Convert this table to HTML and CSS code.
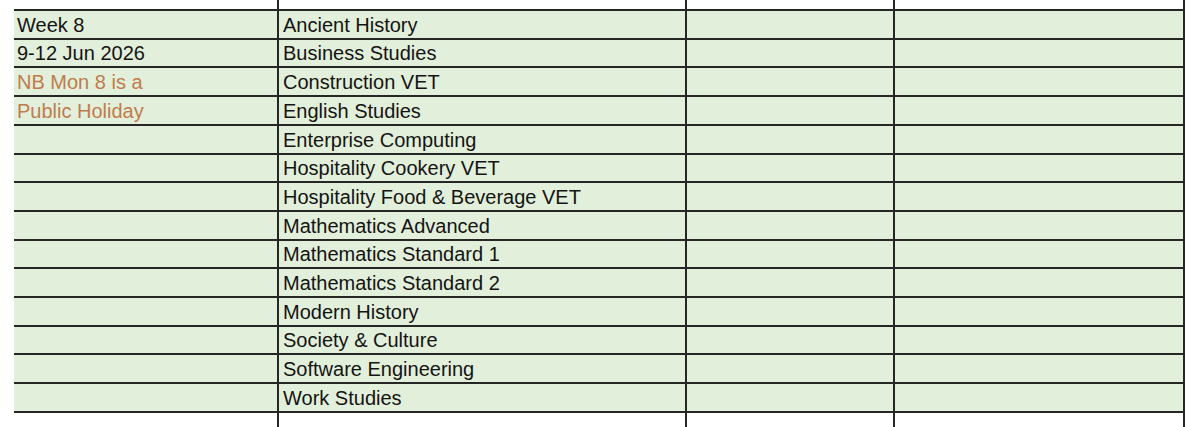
FILE: index.html
```html
<!DOCTYPE html>
<html>
<head>
<meta charset="utf-8">
<link rel="stylesheet" href="styles.css">
</head>
<body>
<div class="sheet">
  <div class="cell top"></div><div class="cell top"></div><div class="cell top"></div><div class="cell top"></div>

  <div class="cell g">Week 8</div><div class="cell g">Ancient History</div><div class="cell g"></div><div class="cell g"></div>
  <div class="cell g">9-12 Jun 2026</div><div class="cell g">Business Studies</div><div class="cell g"></div><div class="cell g"></div>
  <div class="cell g note">NB Mon 8 is a</div><div class="cell g">Construction VET</div><div class="cell g"></div><div class="cell g"></div>
  <div class="cell g note">Public Holiday</div><div class="cell g">English Studies</div><div class="cell g"></div><div class="cell g"></div>
  <div class="cell g"></div><div class="cell g">Enterprise Computing</div><div class="cell g"></div><div class="cell g"></div>
  <div class="cell g"></div><div class="cell g">Hospitality Cookery VET</div><div class="cell g"></div><div class="cell g"></div>
  <div class="cell g"></div><div class="cell g">Hospitality Food &amp; Beverage VET</div><div class="cell g"></div><div class="cell g"></div>
  <div class="cell g"></div><div class="cell g">Mathematics Advanced</div><div class="cell g"></div><div class="cell g"></div>
  <div class="cell g"></div><div class="cell g">Mathematics Standard 1</div><div class="cell g"></div><div class="cell g"></div>
  <div class="cell g"></div><div class="cell g">Mathematics Standard 2</div><div class="cell g"></div><div class="cell g"></div>
  <div class="cell g"></div><div class="cell g">Modern History</div><div class="cell g"></div><div class="cell g"></div>
  <div class="cell g"></div><div class="cell g">Society &amp; Culture</div><div class="cell g"></div><div class="cell g"></div>
  <div class="cell g"></div><div class="cell g">Software Engineering</div><div class="cell g"></div><div class="cell g"></div>
  <div class="cell g"></div><div class="cell g">Work Studies</div><div class="cell g"></div><div class="cell g"></div>

  <div class="cell bottom"></div><div class="cell bottom"></div><div class="cell bottom"></div><div class="cell bottom"></div>
</div>
</body>
</html>
```

FILE: styles.css
```css
html, body {
  margin: 0;
  padding: 0;
  background: #ffffff;
  overflow: hidden;
}

.sheet {
  display: grid;
  grid-template-columns: 265px 408px 208px 290px;
  grid-template-rows: 11px repeat(14, 28.714px) 20px;
  margin-left: 14px;
  width: 1171px;
  font-family: "Liberation Sans", Arial, sans-serif;
  font-size: 20px;
  color: #141414;
}

.cell {
  box-sizing: border-box;
  border-right: 2px solid #262626;
  display: flex;
  align-items: flex-end;
  padding: 0 0 2px 4px;
  line-height: 22px;
  white-space: nowrap;
  overflow: hidden;
}

.cell:nth-child(4n+1) {
  padding-left: 3px;
}

.top {
  border-bottom: 2px solid #262626;
}

.g {
  background: #e2efda;
  border-bottom: 2px solid #262626;
}

.note {
  color: #bf7c4e;
}
```
